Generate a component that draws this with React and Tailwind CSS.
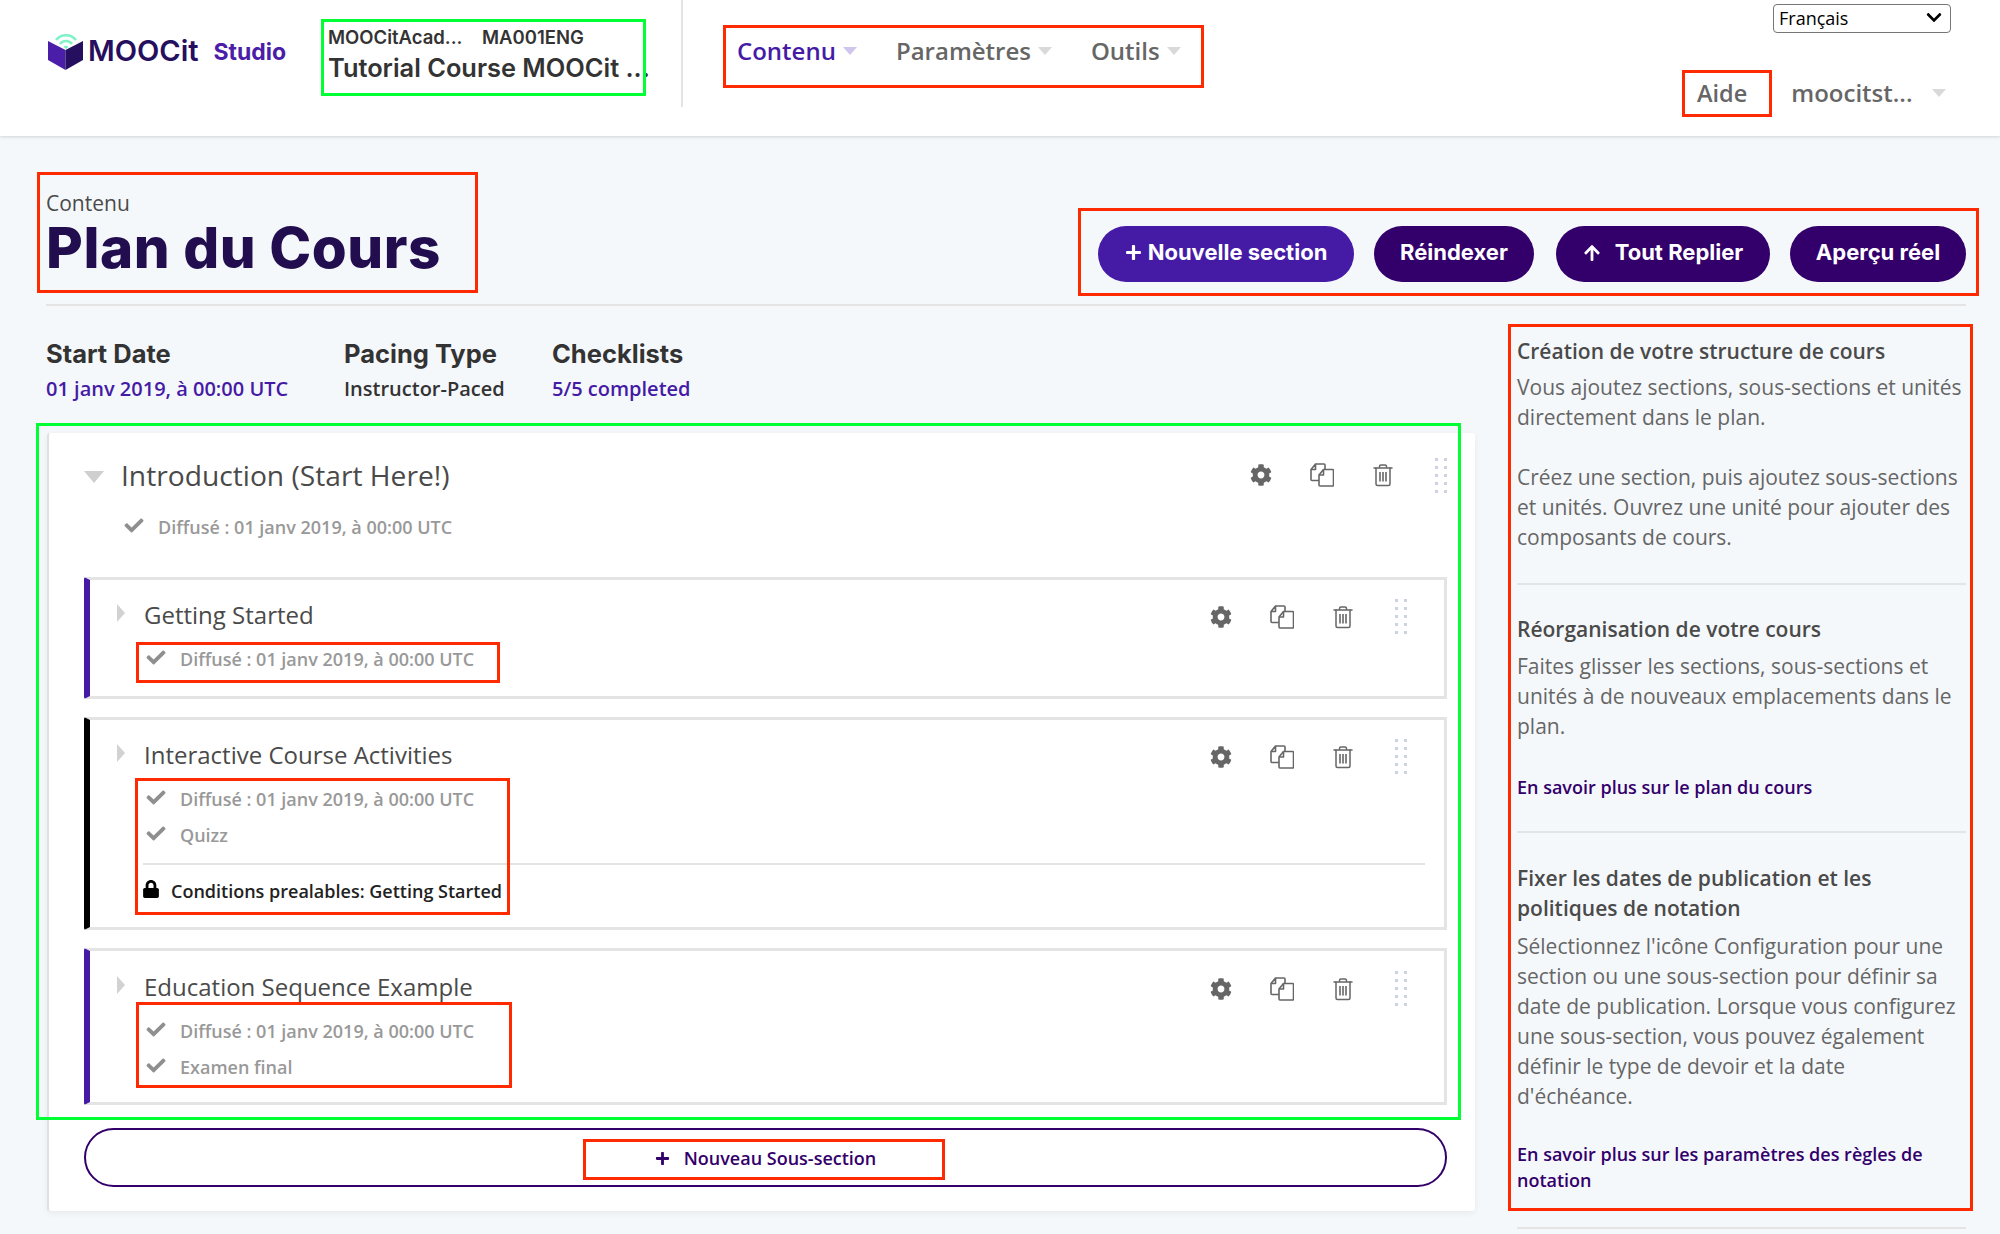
import { FaCog, FaCheck, FaLock, FaPlus, FaArrowUp, FaChevronDown } from 'react-icons/fa'

const sans = "font-['Open_Sans',sans-serif]"
const heading = "font-['Inter',sans-serif]"

function Caret({ className }) {
  return <span className={`inline-block w-0 h-0 border-x-[7px] border-x-transparent border-t-[8px] ${className}`} />
}

function CubeLogo() {
  return (
    <svg viewBox="0 0 36 38" className="w-9 h-[38px] shrink-0">
      <path d="M8 7a13 13 0 0 1 20 0" fill="none" stroke="#7ff2c8" strokeWidth="2.6" />
      <path d="M12 11a7.5 7.5 0 0 1 12 0" fill="none" stroke="#7ff2c8" strokeWidth="2.6" />
      <path d="M15.5 14a3 3 0 0 1 5 0l-2.500 2z" fill="#7ff2c8" />
      <path d="M0 8l17.500 9v20L0 27z" fill="#4a1ea8" />
      <path d="M35 8l-17.500 9v20L35 27z" fill="#260f5e" />
    </svg>
  )
}

function CopyIcon() {
  return (
    <svg viewBox="0 0 24 24" className="w-6 h-6" fill="none" stroke="#666" strokeWidth="1.6" strokeLinejoin="round">
      <path d="M5.500 1H14a1 1 0 0 1 1 1v5M9 17.500H2a1 1 0 0 1-1-1V6.500L5.500 1v5.500H1" />
      <path d="M13.500 6.500h9a1 1 0 0 1 1 1V22a1 1 0 0 1-1 1H10a1 1 0 0 1-1-1V12z" fill="#fff" />
      <path d="M13.500 6.500V12H9" />
    </svg>
  )
}

function TrashIcon() {
  return (
    <svg viewBox="0 0 20 24" className="w-5 h-6" fill="none" stroke="#666" strokeWidth="1.5" strokeLinecap="round">
      <path d="M1 5h18M6.500 5V3.500A1.500 1.500 0 0 1 8 2h4a1.500 1.500 0 0 1 1.500 1.500V5" />
      <path d="M3 5v16a1.500 1.500 0 0 0 1.500 1.500h11A1.500 1.500 0 0 0 17 21V5" />
      <path d="M7 9v9.500M10 9v9.500M13 9v9.500" strokeWidth="1.600" strokeLinecap="butt" />
    </svg>
  )
}

function DragDots() {
  return (
    <div className="grid grid-cols-2 gap-x-[7px] gap-y-[5px] w-[10px]">
      {Array.from({ length: 10 }).map((_, i) => (
        <span key={i} className="w-[3px] h-[3px] bg-[#ccd3de]" />
      ))}
    </div>
  )
}

function Actions() {
  return (
    <div className="flex items-center">
      <FaCog className="w-[22px] h-[22px] text-[#666]" />
      <span className="ml-[38px]"><CopyIcon /></span>
      <span className="ml-[39px]"><TrashIcon /></span>
      <span className="ml-[42px]"><DragDots /></span>
    </div>
  )
}

function StatusRow({ label, className = '' }) {
  return (
    <div className={`flex items-center text-[#999] text-[18px] font-semibold leading-[24px] ${className}`}>
      <FaCheck className="ml-[1px] w-[22px] h-[19px] text-[#8f8f8f] -mt-[4px]" />
      <span className="ml-[13px]">{label}</span>
    </div>
  )
}

function Subsection({ title, bar, height, top = 'pt-[18px]', children }) {
  return (
    <div className={`relative border-y-[3px] border-r-[3px] border-[#e4e4e4] border-l-[6px] rounded-l-[2px] ${bar} ${height}`}>
      <div className={`flex items-start pl-[27px] pr-[39px] ${top}`}>
        <span className="mt-[6px] w-0 h-0 border-y-[9px] border-y-transparent border-l-[8px] border-l-[#d2d2d2]" />
        <div className="ml-[19px] flex-1 flex justify-between items-start">
          <h3 className="text-[24px] leading-[33px] text-[#4a4a4a]">{title}</h3>
          <div className="mt-[1px]"><Actions /></div>
        </div>
      </div>
      <div className="pl-[54px] pr-[19px]">{children}</div>
    </div>
  )
}

function SidebarBlock({ title, gap, children }) {
  return (
    <div className="border-b-[2px] border-[#e4e4e4]">
      <h4 className={`text-[21px] leading-[30px] font-semibold text-[#4a4a4a] ${gap}`}>{title}</h4>
      {children}
    </div>
  )
}

const P = ({ className = '', children }) => (
  <p className={`text-[21px] leading-[30px] text-[#666] ${className}`}>{children}</p>
)

const LearnMore = ({ className = '', children }) => (
  <a className={`block text-[18px] leading-[26px] font-semibold text-[#33006b] ${className}`}>{children}</a>
)

function Note({ className }) {
  return <div className={`absolute pointer-events-none border-[3px] ${className}`} />
}

export default function App() {
  return (
    <div className={`${sans} relative w-[2000px] h-[1234px] overflow-hidden bg-[#f5f8fb]`}>
      <header className="h-[136px] bg-white shadow-[0_1px_3px_rgba(0,0,0,0.15)] flex relative">
        <div className="flex items-start pl-[48px] pt-[33px] w-[328px]">
          <CubeLogo />
          <span className={`${heading} ml-[4px] text-[29px] leading-[36px] font-semibold text-[#260f5e]`}>MOOCit</span>
          <span className={`${heading} ml-[15px] mt-[3px] text-[23px] leading-[32px] font-bold text-[#4a1ea8]`}>Studio</span>
        </div>
        <div className="w-[355px] h-[107px] border-r-[2px] border-[#e4e4e4] pt-[25px]">
          <div className={`${heading} flex text-[18.5px] leading-[24px] font-semibold text-[#333]`}>
            <span className="w-[154px]">MOOCitAcad...</span>
            <span>MA001ENG</span>
          </div>
          <div className={`${heading} mt-[3px] text-[25.4px] leading-[32px] font-semibold text-[#333] whitespace-nowrap`}>Tutorial Course MOOCit ...</div>
        </div>
        <nav className="flex items-start pl-[54px] pt-[34px] text-[24px] leading-[34px] font-semibold text-[#666]">
          <span className="text-[#451ba6]">Contenu</span>
          <Caret className="ml-[7px] mt-[13px] border-t-[#d0c5ec]" />
          <span className="ml-[39px]">Paramètres</span>
          <Caret className="ml-[7px] mt-[13px] border-t-[#d9d9d9]" />
          <span className="ml-[39px]">Outils</span>
          <Caret className="ml-[7px] mt-[13px] border-t-[#d9d9d9]" />
        </nav>
        <div className="ml-auto w-[227px] pr-[49px] pt-[4px] flex flex-col items-end">
          <div className="relative w-[178px] h-[29px]">
            <select defaultValue="fr" className="appearance-none w-full h-full pl-[5px] border border-[#767676] rounded-[4px] bg-white text-[18px] text-black">
              <option value="fr">Français</option>
            </select>
            <FaChevronDown className="absolute right-[6px] top-[5px] w-[22px] h-[17px] text-black" />
          </div>
          <div className="w-[251px] -mr-[5px] mt-[43px] flex items-center text-[24px] leading-[34px] font-semibold text-[#666]">
            <span className="ml-[-8px] text-[23.5px]">Aide</span>
            <span className="ml-[44px]">moocitst...</span>
            <Caret className="ml-[20px] border-t-[#d9d9d9]" />
          </div>
        </div>
      </header>

      <main className="pl-[46px] pr-[34px]">
        <div className="flex justify-between items-end h-[170px] border-b-[2px] border-[#e4e4e4] pb-[22px]">
          <div className="mb-[3px]">
            <div className="text-[21px] leading-[27px] text-[#4a4a4a]">Contenu</div>
            <h1 className={`${heading} text-[56.5px] leading-[62px] font-extrabold text-[#220d4e] tracking-[0.01em]`}>Plan du Cours</h1>
          </div>
          <div className={`${heading} flex text-[22px] font-bold text-white`}>
            <button className="h-[56px] w-[256px] pb-[3px] rounded-[28px] bg-[#451ba6] flex items-center justify-center gap-[6px]">
              <FaPlus className="w-[17px] h-[17px]" /> Nouvelle section
            </button>
            <button className="ml-[20px] h-[56px] w-[160px] pb-[3px] rounded-[28px] bg-[#33006b]">Réindexer</button>
            <button className="ml-[22px] h-[56px] w-[214px] pb-[3px] rounded-[28px] bg-[#33006b] flex items-center justify-center gap-[14px]">
              <FaArrowUp className="w-[18px] h-[18px]" /> Tout Replier
            </button>
            <button className="ml-[20px] h-[56px] w-[176px] pb-[3px] rounded-[28px] bg-[#33006b]">Aperçu réel</button>
          </div>
        </div>

        <div className="flex">
          <div className="w-[1429px] shrink-0">
            <div className="flex pt-[31px] h-[127px]">
              <div className="w-[298px]">
                <div className={`${heading} text-[25.5px] leading-[34px] font-bold text-[#333]`}>Start Date</div>
                <div className="mt-[1px] text-[20px] leading-[34px] font-semibold text-[#451ba6]">01 janv 2019, à 00:00 UTC</div>
              </div>
              <div className="w-[208px]">
                <div className={`${heading} text-[25.5px] leading-[34px] font-bold text-[#333]`}>Pacing Type</div>
                <div className="mt-[1px] text-[20px] leading-[34px] font-semibold text-[#333]">Instructor-Paced</div>
              </div>
              <div>
                <div className={`${heading} text-[25.5px] leading-[34px] font-bold text-[#333]`}>Checklists</div>
                <div className="mt-[1px] text-[20px] leading-[34px] font-semibold text-[#451ba6]">5/5 completed</div>
              </div>
            </div>

            <section className="ml-[1px] h-[778px] bg-white border-l-[2px] border-[#e0e0e0] rounded-[3px] shadow-[0_2px_6px_rgba(0,0,0,0.06)] pl-[35px] pr-[28px]">
              <div className="h-[144px] pt-[22px] pr-[2px]">
                <div className="flex items-start">
                  <Caret className="mt-[16px] border-x-[10px] border-t-[12px] border-t-[#cfcfcf]" />
                  <div className="ml-[17px] flex-1 flex justify-between">
                    <h2 className="text-[28.2px] leading-[40px] text-[#4a4a4a]">Introduction (Start Here!)</h2>
                    <Actions />
                  </div>
                </div>
                <StatusRow label="Diffusé : 01 janv 2019, à 00:00 UTC" className="ml-[38px] mt-[20px]" />
              </div>

              <div className="flex flex-col gap-[18px]">
                <Subsection title="Getting Started" bar="border-l-[#451ba6]" height="h-[122px]">
                  <StatusRow label="Diffusé : 01 janv 2019, à 00:00 UTC" className="mt-[13px]" />
                </Subsection>
                <Subsection title="Interactive Course Activities" bar="border-l-black" height="h-[213px]">
                  <StatusRow label="Diffusé : 01 janv 2019, à 00:00 UTC" className="mt-[13px]" />
                  <StatusRow label="Quizz" className="mt-[12px]" />
                  <div className="ml-[-1px] mt-[16px] border-t-[2px] border-[#e4e4e4] pt-[14px] flex items-center text-[18px] leading-[24px] font-semibold text-[#222]">
                    <FaLock className="w-[16px] h-[18px] text-black -mt-[4px]" />
                    <span className="ml-[12px]">Conditions prealables: Getting Started</span>
                  </div>
                </Subsection>
                <Subsection title="Education Sequence Example" bar="border-l-[#451ba6]" height="h-[157px]" top="pt-[19px]">
                  <StatusRow label="Diffusé : 01 janv 2019, à 00:00 UTC" className="mt-[13px]" />
                  <StatusRow label="Examen final" className="mt-[12px]" />
                </Subsection>
              </div>

              <button className="mt-[23px] w-full h-[59px] rounded-[30px] border-[2px] border-[#33006b] flex items-center justify-center pt-[2px] text-[18px] font-semibold text-[#33006b]">
                <FaPlus className="w-[15px] h-[15px]" />
                <span className="ml-[14px]">Nouveau Sous-section</span>
              </button>
            </section>
          </div>

          <aside className="ml-[42px] w-[450px] pt-[30px]">
            <SidebarBlock title="Création de votre structure de cours" gap="mb-[6px]">
              <P>Vous ajoutez sections, sous-sections et unités directement dans le plan.</P>
              <P className="mt-[30px] pb-[31px]">Créez une section, puis ajoutez sous-sections et unités. Ouvrez une unité pour ajouter des composants de cours.</P>
            </SidebarBlock>
            <div className="pt-[29px]">
              <SidebarBlock title="Réorganisation de votre cours" gap="mb-[7px]">
                <P>Faites glisser les sections, sous-sections et unités à de nouveaux emplacements dans le plan.</P>
                <LearnMore className="mt-[33px] pb-[31px]">En savoir plus sur le plan du cours</LearnMore>
              </SidebarBlock>
            </div>
            <div className="pt-[30px]">
              <SidebarBlock title="Fixer les dates de publication et les politiques de notation" gap="mb-[8px]">
                <P>Sélectionnez l'icône Configuration pour une section ou une sous-section pour définir sa date de publication. Lorsque vous configurez une sous-section, vous pouvez également définir le type de devoir et la date d'échéance.</P>
                <LearnMore className="mt-[30px] pb-[34px]">En savoir plus sur les paramètres des règles de notation</LearnMore>
              </SidebarBlock>
            </div>
          </aside>
        </div>
      </main>

      <Note className="left-[321px] top-[19px] w-[325px] h-[77px] border-[#00ff33]" />
      <Note className="left-[723px] top-[25px] w-[481px] h-[63px] border-[#ff2a00]" />
      <Note className="left-[1682px] top-[70px] w-[90px] h-[47px] border-[#ff2a00]" />
      <Note className="left-[37px] top-[172px] w-[441px] h-[121px] border-[#ff2a00]" />
      <Note className="left-[1078px] top-[208px] w-[901px] h-[88px] border-[#ff2a00]" />
      <Note className="left-[1508px] top-[324px] w-[465px] h-[887px] border-[#ff2a00]" />
      <Note className="left-[36px] top-[423px] w-[1425px] h-[697px] border-[#00ff33]" />
      <Note className="left-[136px] top-[642px] w-[364px] h-[41px] border-[#ff2a00]" />
      <Note className="left-[135px] top-[778px] w-[375px] h-[137px] border-[#ff2a00]" />
      <Note className="left-[136px] top-[1002px] w-[376px] h-[86px] border-[#ff2a00]" />
      <Note className="left-[583px] top-[1139px] w-[362px] h-[41px] border-[#ff2a00]" />
    </div>
  )
}
